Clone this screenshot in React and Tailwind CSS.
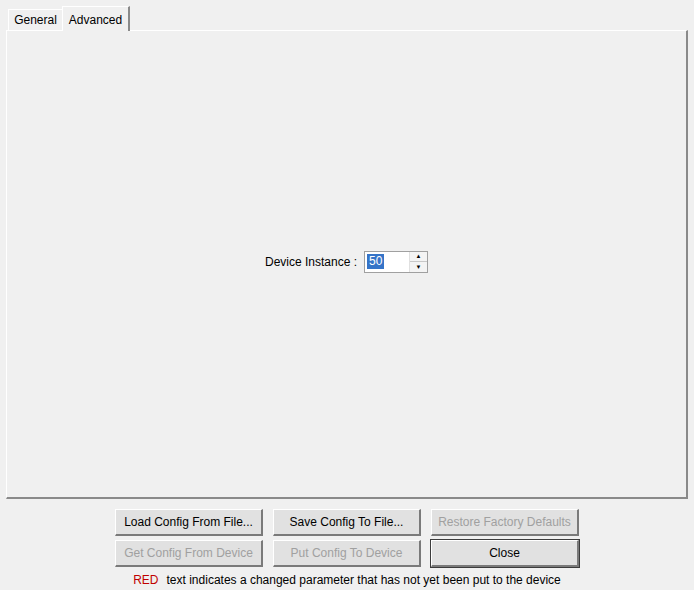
import React from "react";

const font = { fontFamily: '"Liberation Sans", Arial, sans-serif' };

function WinButton({ children, disabled, primary }) {
  return (
    <button
      className={
        "h-[27px] w-[148px] bg-[#e1e1e1] text-[12px] border-t border-l border-t-white border-l-white border-r-2 border-b-2 border-r-[#7a7a7a] border-b-[#7a7a7a] " +
        (primary ? "outline outline-1 outline-[#3c3c3c] " : "") +
        (disabled ? "text-[#a0a0a0]" : "text-black")
      }
    >
      {children}
    </button>
  );
}

function Spinner() {
  return (
    <div className="flex h-[22px] w-[64px] items-center border border-[#a0a0a0] bg-white pl-[2px]">
      <span className="bg-[#3574c8] px-[2px] text-[12px] leading-[15px] text-white">50</span>
      <div className="ml-auto flex h-full w-[18px] flex-col border-l border-[#e0e0e0]">
        <div className="flex flex-1 items-center justify-center border-b border-[#c8c8c8] bg-[#f4f4f4] text-[6px] leading-none text-black">▲</div>
        <div className="flex flex-1 items-center justify-center bg-[#f4f4f4] text-[6px] leading-none text-black">▼</div>
      </div>
    </div>
  );
}

export default function App() {
  return (
    <div className="h-[590px] w-[694px] overflow-hidden bg-[#f0f0f0]" style={font}>
      <div className="flex h-[30px] items-end pl-[8px]">
        <div className="flex h-[21px] w-[54px] items-center justify-center border-l border-t border-white text-[12px] text-black">
          General
        </div>
        <div className="-mb-px flex h-[25px] w-[68px] items-start justify-center border-l border-t border-white border-r-2 border-r-[#8a8a8a] bg-[#f0f0f0] pt-[4px] text-[12px] text-black">
          Advanced
        </div>
      </div>
      <div className="mx-[6px] flex h-[469px] w-[682px] items-center justify-center border-l border-t border-white border-r-2 border-b-2 border-r-[#8a8a8a] border-b-[#8a8a8a]">
        <div className="-mt-[5px] flex items-center gap-[7px]">
          <span className="text-[12px] text-black">Device Instance :</span>
          <Spinner />
        </div>
      </div>
      <div className="mt-[10px] grid grid-cols-[148px_148px_148px] justify-center gap-x-[10px] gap-y-[4px]">
        <WinButton>Load Config From File...</WinButton>
        <WinButton>Save Config To File...</WinButton>
        <WinButton disabled>Restore Factory Defaults</WinButton>
        <WinButton disabled>Get Config From Device</WinButton>
        <WinButton disabled>Put Config To Device</WinButton>
        <WinButton primary>Close</WinButton>
      </div>
      <div className="mt-[6px] flex justify-center text-[12px] leading-[14px] text-black">
        <span className="text-[#c00000]">RED</span>
        <span className="ml-[8px]">text indicates a changed parameter that has not yet been put to the device</span>
      </div>
    </div>
  );
}
